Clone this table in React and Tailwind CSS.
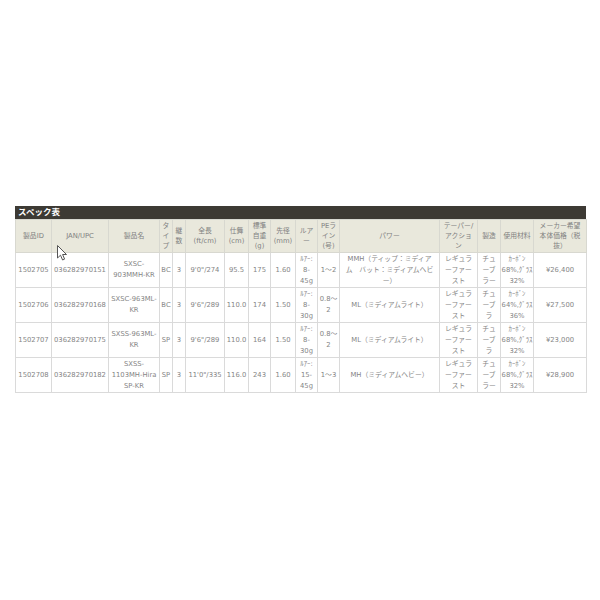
import React from "react";

const cols = [36, 57, 51, 13, 13, 39, 24, 22, 25, 22, 22, 100, 38, 23, 33, 53];

const L = ({ lines }) => (
  <>
    {lines.map((l, i) => (
      <span key={i} className="block whitespace-nowrap">
        {l}
      </span>
    ))}
  </>
);

const header = [
  ["製品ID"],
  ["JAN/UPC"],
  ["製品名"],
  ["タ", "イ", "プ"],
  ["継", "数"],
  ["全長", "(ft/cm)"],
  ["仕舞", "(cm)"],
  ["標準", "自重", "(g)"],
  ["先径", "(mm)"],
  ["ルア", "ー"],
  ["PEラ", "イン", "(号)"],
  ["パワー"],
  ["テーパー/", "アクショ", "ン"],
  ["製造"],
  ["使用材料"],
  ["メーカー希望", "本体価格（税", "抜）"],
];

const rows = [
  [
    ["1502705"],
    ["036282970151"],
    ["SXSC-", "903MMH-KR"],
    ["BC"],
    ["3"],
    ["9'0\"/274"],
    ["95.5"],
    ["175"],
    ["1.60"],
    ["ﾙｱｰ:", "8-", "45g"],
    ["1～2"],
    ["MMH（ティップ：ミディア", "ム　バット：ミディアムヘビ", "ー）"],
    ["レギュラ", "ーファー", "スト"],
    ["チュ", "ーブ", "ラー"],
    ["ｶｰﾎﾞﾝ", "68%,ｸﾞﾗｽ", "32%"],
    ["¥26,400"],
  ],
  [
    ["1502706"],
    ["036282970168"],
    ["SXSC-963ML-", "KR"],
    ["BC"],
    ["3"],
    ["9'6\"/289"],
    ["110.0"],
    ["174"],
    ["1.50"],
    ["ﾙｱｰ:", "8-", "30g"],
    ["0.8～", "2"],
    ["ML（ミディアムライト）"],
    ["レギュラ", "ーファー", "スト"],
    ["チュ", "ーブ", "ラ"],
    ["ｶｰﾎﾞﾝ", "64%,ｸﾞﾗｽ", "36%"],
    ["¥27,500"],
  ],
  [
    ["1502707"],
    ["036282970175"],
    ["SXSS-963ML-", "KR"],
    ["SP"],
    ["3"],
    ["9'6\"/289"],
    ["110.0"],
    ["164"],
    ["1.50"],
    ["ﾙｱｰ:", "8-", "30g"],
    ["0.8～", "2"],
    ["ML（ミディアムライト）"],
    ["レギュラ", "ーファー", "スト"],
    ["チュ", "ーブ", "ラ"],
    ["ｶｰﾎﾞﾝ", "68%,ｸﾞﾗｽ", "32%"],
    ["¥23,000"],
  ],
  [
    ["1502708"],
    ["036282970182"],
    ["SXSS-", "1103MH-Hira", "SP-KR"],
    ["SP"],
    ["3"],
    ["11'0\"/335"],
    ["116.0"],
    ["243"],
    ["1.60"],
    ["ﾙｱｰ:", "15-", "45g"],
    ["1～3"],
    ["MH（ミディアムヘビー）"],
    ["レギュラ", "ーファー", "スト"],
    ["チュ", "ーブ", "ラー"],
    ["ｶｰﾎﾞﾝ", "68%,ｸﾞﾗｽ", "32%"],
    ["¥28,900"],
  ],
];

export default function App() {
  return (
    <div
      className="relative w-[600px] h-[600px] bg-white pt-[206px] px-[15px] text-[#858585]"
      style={{ fontFamily: '"DejaVu Sans", "Noto Sans CJK JP", sans-serif' }}
    >
      <div className="w-[571px] h-[13px] bg-[#3d3a34] text-white font-bold text-[8.5px] leading-[13px] pl-[3px]">
        スペック表
      </div>
      <table className="w-[571px] table-fixed border-collapse text-[6.8px]">
        <colgroup>
          {cols.map((w, i) => (
            <col key={i} style={{ width: w }} />
          ))}
        </colgroup>
        <thead>
          <tr className="h-[33px] bg-[#e9e8dc]">
            {header.map((h, i) => (
              <th
                key={i}
                className="border border-[#d8d8d0] font-normal text-center align-middle leading-[10px] p-0 text-[#808080]"
              >
                <L lines={h} />
              </th>
            ))}
          </tr>
        </thead>
        <tbody>
          {rows.map((r, ri) => (
            <tr key={ri} className="h-[35px]">
              {r.map((c, ci) => (
                <td
                  key={ci}
                  className="border border-[#dadada] text-center align-middle leading-[11px] p-0"
                >
                  <L lines={c} />
                </td>
              ))}
            </tr>
          ))}
        </tbody>
      </table>
      <svg
        className="absolute left-[57px] top-[245px]"
        width="11"
        height="17"
        viewBox="0 0 11 17"
      >
        <path
          d="M0.5 0.5 L0.5 13 L3.5 10.2 L5.6 15 L7.6 14.1 L5.6 9.5 L9.5 9.5 Z"
          fill="#fff"
          stroke="#555"
          strokeWidth="1"
          strokeLinejoin="round"
        />
      </svg>
    </div>
  );
}
